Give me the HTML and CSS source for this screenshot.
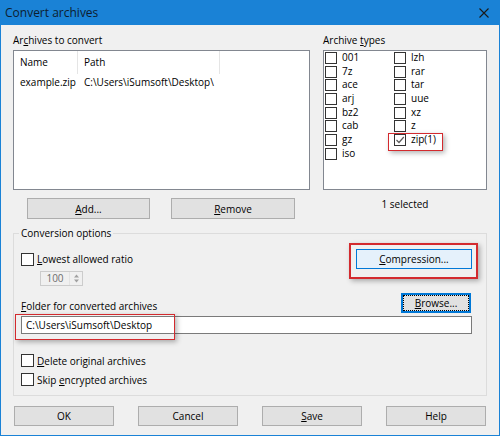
FILE: index.html
```html
<!DOCTYPE html>
<html>
<head>
<meta charset="utf-8">
<title>Convert archives</title>
<link rel="stylesheet" href="styles.css">
</head>
<body>
<div class="window">
  <div class="titlebar">
    <span class="title">Convert archives</span>
    <svg class="close" width="10" height="10" viewBox="0 0 10 10"><path d="M0.5 0.5 L9.5 9.5 M9.5 0.5 L0.5 9.5" stroke="#1a1a1a" stroke-width="1.1" fill="none"/></svg>
  </div>
  <div class="body">
    <div class="top">
      <div class="col-left">
        <div class="label">Ar<u>c</u>hives to convert</div>
        <div class="listview">
          <div class="lv-head">
            <div class="lv-col name">Name</div>
            <div class="lv-col path">Path</div>
          </div>
          <div class="lv-row">
            <div class="lv-cell name">example.zip</div>
            <div class="lv-cell path">C:\Users\iSumsoft\Desktop\</div>
          </div>
        </div>
        <div class="btn-row">
          <button class="btn add"><u>A</u>dd...</button>
          <button class="btn remove"><u>R</u>emove</button>
        </div>
      </div>
      <div class="col-right">
        <div class="label">Archive <u>t</u>ypes</div>
        <div class="typelist">
          <div class="item"><span class="cb"></span>001</div>
          <div class="item"><span class="cb"></span>7z</div>
          <div class="item"><span class="cb"></span>ace</div>
          <div class="item"><span class="cb"></span>arj</div>
          <div class="item"><span class="cb"></span>bz2</div>
          <div class="item"><span class="cb"></span>cab</div>
          <div class="item"><span class="cb"></span>gz</div>
          <div class="item"><span class="cb"></span>iso</div>
          <div class="item"><span class="cb"></span>lzh</div>
          <div class="item"><span class="cb"></span>rar</div>
          <div class="item"><span class="cb"></span>tar</div>
          <div class="item"><span class="cb"></span>uue</div>
          <div class="item"><span class="cb"></span>xz</div>
          <div class="item"><span class="cb"></span>z</div>
          <div class="item mark mark-zip"><span class="cb checked"><svg width="10" height="10" viewBox="0 0 10 10"><path d="M1.5 5 L4 7.5 L8.8 2" stroke="#5a5a5a" stroke-width="1.2" fill="none"/></svg></span>zip(1)</div>
        </div>
        <div class="selected">1 selected</div>
      </div>
    </div>

    <fieldset class="group">
      <legend>Conversion options</legend>
      <div class="opt-row1">
        <div class="check"><span class="cb big"></span><span><u>L</u>owest allowed ratio</span></div>
        <button class="btn compression mark mark-comp"><u>C</u>ompression...</button>
      </div>
      <div class="spinner">
        <span class="spin-val">100</span>
        <span class="spin-arrows">
          <svg width="7" height="11" viewBox="0 0 7 11"><path d="M3.5 1.5 L6 4.5 L1 4.5 Z M3.5 9.5 L6 6.5 L1 6.5 Z" fill="#a0a0a0"/></svg>
        </span>
      </div>
      <div class="folder-row">
        <span class="folder-label"><u>F</u>older for converted archives</span>
        <button class="btn browse"><u>B</u>rowse...</button>
      </div>
      <div class="field mark mark-field">C:\Users\iSumsoft\Desktop</div>
      <div class="checks">
        <div class="check row"><span class="cb big"></span><span><u>D</u>elete original archives</span></div>
        <div class="check row"><span class="cb big"></span><span>Skip <u>e</u>ncrypted archives</span></div>
      </div>
    </fieldset>

    <div class="footer">
      <button class="btn">OK</button>
      <button class="btn">Cancel</button>
      <button class="btn"><u>S</u>ave</button>
      <button class="btn">Help</button>
    </div>
  </div>
</div>
</body>
</html>
```
FILE: styles.css
```css
body {
  margin: 0;
  background: #ffffff;
  font-family: "Open Sans", "Noto Sans", sans-serif;
  font-size: 10px;
  color: #000;
}

.window {
  width: 500px;
  height: 436px;
  box-sizing: border-box;
  border: 1px solid #1a82d6;
  border-top: 0;
  background: #f0f0f0;
  display: flex;
  flex-direction: column;
}

.titlebar {
  height: 25px;
  flex: none;
  background: #1a82d6;
  display: flex;
  align-items: center;
  justify-content: space-between;
  padding: 0 10px 0 4px;
}

.title {
  font-size: 12px;
  color: #0d1d2e;
}

.close {
  display: block;
}

.body {
  padding: 7px 12px 0;
}

.top {
  display: flex;
  gap: 13px;
}

.col-left {
  width: 297px;
}

.col-right {
  width: 164px;
}

.label {
  height: 18px;
  line-height: 16px;
}

u {
  text-decoration-thickness: 1px;
  text-underline-offset: 1px;
}

.listview {
  height: 140px;
  box-sizing: border-box;
  border: 1px solid #828790;
  background: #fff;
}

.lv-head {
  display: flex;
  height: 23px;
}

.lv-col {
  box-sizing: border-box;
  line-height: 23px;
  padding-left: 6px;
  border-right: 1px solid #e5e5e5;
}

.lv-col.name,
.lv-cell.name {
  width: 64px;
}

.lv-col.path,
.lv-cell.path {
  width: 142px;
}

.lv-row {
  display: flex;
  height: 16px;
  line-height: 16px;
}

.lv-cell {
  box-sizing: border-box;
  padding-left: 6px;
  white-space: nowrap;
  overflow: hidden;
}

.btn-row {
  display: flex;
  gap: 21px;
  padding-left: 14px;
  margin-top: 8px;
}

.btn {
  height: 20px;
  box-sizing: border-box;
  background: #e1e1e1;
  border: 1px solid #adadad;
  font-family: inherit;
  font-size: 10px;
  color: #000;
  padding: 0;
  margin: 0;
}

.btn.add {
  width: 123px;
  height: 21px;
}

.btn.remove {
  width: 124px;
  height: 21px;
}

.typelist {
  height: 140px;
  box-sizing: border-box;
  border: 1px solid #828790;
  background: #fff;
  display: grid;
  grid-template-columns: 69px 1fr;
  grid-template-rows: repeat(8, 13.7px);
  grid-auto-flow: column;
  align-content: start;
  padding-left: 1px;
}

.item {
  display: flex;
  align-items: center;
  gap: 5px;
  line-height: 13.7px;
  position: relative;
}

.cb {
  width: 12px;
  height: 12px;
  box-sizing: border-box;
  border: 1px solid #333;
  background: #fff;
  flex: none;
  display: flex;
  align-items: center;
  justify-content: center;
}

.cb.big {
  width: 13px;
  height: 13px;
}

.selected {
  text-align: center;
  margin-top: 6px;
  line-height: 16px;
}

.mark {
  position: relative;
}

.mark::after {
  content: "";
  position: absolute;
  box-sizing: border-box;
  border: 1px solid #d32a2e;
  box-shadow: 2px 2px 5px rgba(0, 0, 0, 0.3);
  pointer-events: none;
}

.mark-zip::after {
  left: -6px;
  top: 0;
  width: 55px;
  height: 18px;
  border-width: 1.5px;
}

.mark-comp::after {
  left: -8px;
  top: -7px;
  width: 129px;
  height: 36px;
  border-width: 2px;
}

.mark-field::after {
  left: -7px;
  top: -3px;
  width: 160px;
  height: 26px;
  border-width: 1.5px;
}

.group {
  margin: 7px 0 0;
  padding: 0 14px 6px 7px;
  border: 1px solid #dcdcdc;
  min-width: 0;
}

.group legend {
  padding: 0 2px;
  margin-left: -2px;
  line-height: 14px;
}

.opt-row1 {
  display: flex;
  justify-content: space-between;
  align-items: center;
  height: 20px;
  margin-top: 9px;
}

.check {
  display: flex;
  align-items: center;
  gap: 3px;
}

.btn.compression {
  width: 116px;
  background: #e5f1fb;
  border-color: #0078d7;
}

.spinner {
  margin: 2px 0 0 19px;
  width: 43px;
  height: 15px;
  box-sizing: border-box;
  border: 1px solid #cccccc;
  display: flex;
  align-items: center;
}

.spin-val {
  flex: 1;
  text-align: center;
  color: #6d6d6d;
  line-height: 13px;
}

.spin-arrows {
  width: 12px;
  height: 13px;
  display: flex;
  align-items: center;
  justify-content: center;
  border-left: 1px solid #e3e3e3;
}

.spin-arrows svg {
  display: block;
}

.folder-row {
  display: flex;
  justify-content: space-between;
  align-items: flex-end;
  margin-top: 7px;
}

.folder-label {
  line-height: 14px;
}

.btn.browse {
  width: 70px;
  margin-right: 1px;
  border-color: #0078d7;
  box-shadow: inset 0 0 0 1px #0078d7;
  outline: 1px dotted #000;
  outline-offset: -3px;
}

.field {
  margin-top: 3px;
  height: 18px;
  box-sizing: border-box;
  border: 1px solid #7a7a7a;
  background: #fff;
  padding-left: 4px;
  line-height: 16px;
}

.checks {
  margin-top: 17px;
}

.check.row {
  height: 19px;
}

.footer {
  display: grid;
  grid-template-columns: repeat(4, 100px);
  gap: 24px;
  padding: 0 1px;
  margin-top: 10px;
}
```
